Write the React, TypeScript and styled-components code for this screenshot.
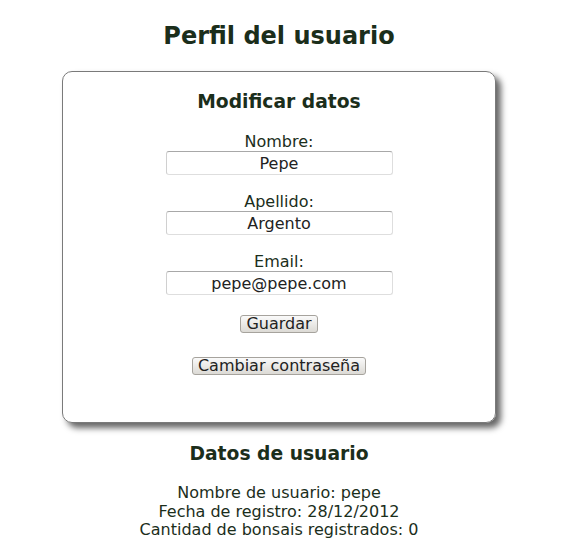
import React from "react";
import styled, { createGlobalStyle } from "styled-components";

const Global = createGlobalStyle`
  html, body { margin: 0; padding: 0; background: #fff; }
  body { font-family: "DejaVu Sans", Verdana, sans-serif; color: #1b2e1b; }
`;

const Page = styled.div`
  width: 558px;
  display: flex;
  flex-direction: column;
  align-items: center;
  text-align: center;
`;

const Title = styled.h2`
  font-size: 24px;
  line-height: 28px;
  font-weight: bold;
  margin: 22px 0 21px;
`;

const Card = styled.div`
  width: 432px;
  box-sizing: content-box;
  border: 1px solid #7a7a7a;
  border-radius: 10px;
  box-shadow: 5px 5px 6px #666;
  display: flex;
  flex-direction: column;
  align-items: center;
  padding: 19px 0 47px;
`;

const SubTitle = styled.h3`
  font-size: 18.72px;
  line-height: 22px;
  font-weight: bold;
  margin: 0 0 19px;
`;

const Field = styled.div`
  display: flex;
  flex-direction: column;
  align-items: center;
  margin-bottom: 17px;
  &:last-of-type { margin-bottom: 20px; }
`;

const Label = styled.label`
  font-size: 16px;
  line-height: 19px;
`;

const Input = styled.input`
  width: 227px;
  height: 24px;
  box-sizing: border-box;
  border: 1px solid #dedede;
  border-top-color: #a8a8a8;
  border-left-color: #d0d0d0;
  border-radius: 3px;
  font-family: "DejaVu Sans", Verdana, sans-serif;
  font-size: 16px;
  color: #222;
  text-align: center;
  padding: 0 4px;
  background: #fff;
  outline: none;
`;

const Button = styled.button<{ $gap?: number }>`
  font-family: "DejaVu Sans", Verdana, sans-serif;
  font-size: 16px;
  line-height: 16px;
  height: 18px;
  padding: 0 5px;
  color: #222;
  background: linear-gradient(#fafafa, #dcdad5);
  border: 1px solid #a6a39d;
  border-radius: 3px;
  margin-top: ${(p) => p.$gap ?? 0}px;
`;

const Info = styled.div`
  font-size: 16px;
  line-height: 18.5px;
`;

const InfoTitle = styled(SubTitle)`
  margin: 20px 0 19px;
`;

export default function App() {
  return (
    <>
      <Global />
      <Page>
        <Title>Perfil del usuario</Title>
        <Card>
          <SubTitle>Modificar datos</SubTitle>
          <Field>
            <Label>Nombre:</Label>
            <Input defaultValue="Pepe" />
          </Field>
          <Field>
            <Label>Apellido:</Label>
            <Input defaultValue="Argento" />
          </Field>
          <Field>
            <Label>Email:</Label>
            <Input defaultValue="pepe@pepe.com" />
          </Field>
          <Button>Guardar</Button>
          <Button $gap={24}>Cambiar contraseña</Button>
        </Card>
        <InfoTitle>Datos de usuario</InfoTitle>
        <Info>Nombre de usuario: pepe</Info>
        <Info>Fecha de registro: 28/12/2012</Info>
        <Info>Cantidad de bonsais registrados: 0</Info>
      </Page>
    </>
  );
}
